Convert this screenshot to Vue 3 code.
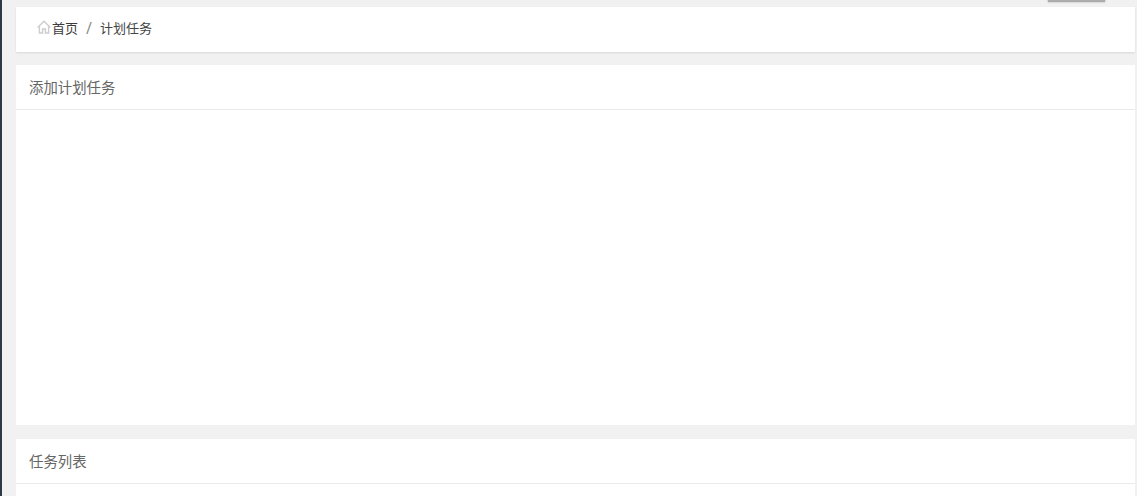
<script setup>
const panels = [
  { title: '添加计划任务', bodyClass: 'tall' },
  { title: '任务列表', bodyClass: 'rest' },
]
</script>

<template>
  <div class="page">
    <aside class="side"></aside>
    <main class="main">
      <div class="topbtn"></div>
      <nav class="crumb">
        <svg class="home" viewBox="0 0 14 14" width="14" height="14" fill="none" stroke="#cdcdcd" stroke-width="1.4">
          <path d="M0.6 7.4 7 1.2l6.4 6.2" />
          <path d="M2.4 6.2v6.8h3.2V9h2.8v4h3.2V6.2" />
        </svg>
        <span class="c1">首页</span>
        <span class="sep">/</span>
        <span class="c2">计划任务</span>
      </nav>
      <section v-for="p in panels" :key="p.title" class="panel">
        <header class="head">{{ p.title }}</header>
        <div :class="p.bodyClass"></div>
      </section>
    </main>
    <div class="edge"></div>
  </div>
</template>

<style>
html, body { margin: 0; background: #f1f1f1; overflow: hidden; }
</style>

<style scoped>
.page {
  display: flex;
  width: 1138px;
  height: 496px;
  overflow: hidden;
  font-family: "Open Sans", "Noto Sans CJK SC", sans-serif;
  font-size: 13px;
}
.side { flex: 0 0 2px; background: #2d3945; }
.edge { flex: 0 0 1px; background: #fff; }
.main {
  position: relative;
  flex: 1;
  min-width: 0;
  background: #f1f1f1;
  padding: 7px 2px 0 14px;
}
.topbtn {
  position: absolute;
  left: 1046px;
  top: -2px;
  width: 57px;
  height: 4px;
  background: linear-gradient(#b8b8b8, #a8a8a8);
  box-shadow: 0 0 2px rgba(0, 0, 0, 0.35);
}
.crumb {
  display: flex;
  align-items: center;
  box-sizing: border-box;
  height: 45px;
  padding: 0 0 4px 21px;
  background: #fff;
  box-shadow: 0 1px 2px rgba(0, 0, 0, 0.1);
  color: #3c3c3c;
}
.home { margin-right: 1px; margin-top: -2px; }
.sep { margin: 0 8px 0 8px; color: #8a8a8a; font-size: 16px; line-height: 16px; }
.c2 { color: #444; }
.panel { background: #fff; margin-top: 13px; }
.panel + .panel { margin-top: 14px; }
.head {
  height: 44px;
  line-height: 45px;
  padding-left: 13px;
  border-bottom: 1px solid #eaeaea;
  color: #666;
  font-size: 14.4px;
}
.tall { height: 315px; }
.rest { height: 40px; }
</style>
